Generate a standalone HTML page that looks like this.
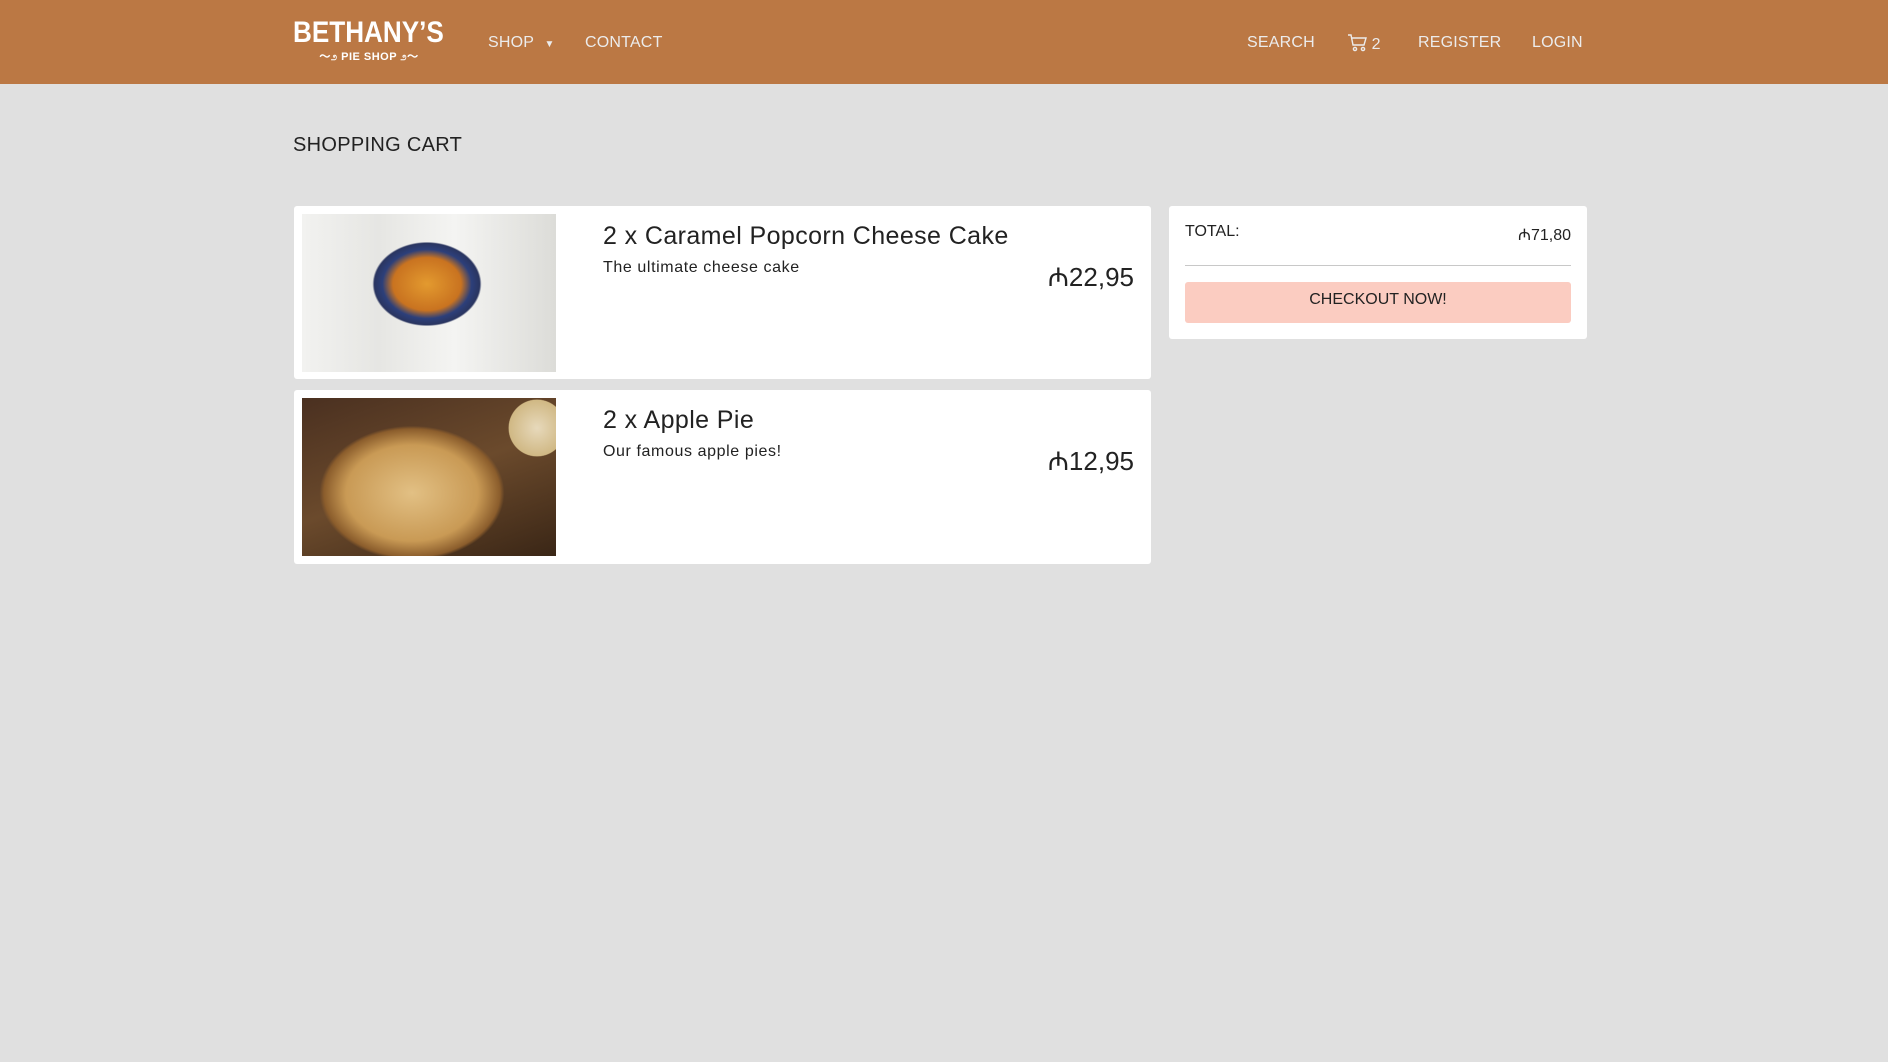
<!DOCTYPE html>
<html><head><meta charset="utf-8"><style>
*{margin:0;padding:0;box-sizing:border-box}
body{width:1888px;height:1062px;background:#e0e0e0;font-family:"Liberation Sans",sans-serif;color:#222;position:relative;overflow:hidden}
.nav{position:absolute;left:0;top:0;width:1888px;height:84px;background:#bb7844}
.nl{position:absolute;top:34px;font-size:16px;color:#ececec;letter-spacing:0.2px}
.logo{position:absolute;left:293px;top:17px;width:152px;height:50px;color:#fff;overflow:hidden}
.logo .b{font-family:"Liberation Sans Narrow","Liberation Sans",sans-serif;font-weight:bold;font-size:30px;line-height:32px;white-space:nowrap;transform:scaleX(0.87);transform-origin:left top;width:200px}
.logo .s{font-size:11px;font-weight:bold;line-height:16px;letter-spacing:0.5px;text-align:center;white-space:nowrap}
h1{position:absolute;left:293px;top:134px;font-size:20px;font-weight:normal;color:#222;letter-spacing:0.3px}
.card{position:absolute;background:#fff;border-radius:3px}
.img{position:absolute;left:8px;top:8px;width:254px;height:158px}
.t{position:absolute;left:309px;font-size:25px;color:#222;letter-spacing:0.4px}
.d{position:absolute;left:309px;font-size:16px;color:#222;letter-spacing:0.6px}
.p{position:absolute;right:17px;font-size:26px;color:#222}
.m{font-family:"DejaVu Sans",sans-serif}
</style></head><body>
<div class="nav">
 <div class="logo"><div class="b">BETHANY’S</div><div class="s">〜೨ PIE SHOP ೨〜</div></div>
 <div class="nl" style="left:488px">SHOP <span style="font-size:10px;margin-left:6px">▼</span></div>
 <div class="nl" style="left:585px">CONTACT</div>
 <div class="nl" style="left:1247px">SEARCH</div>
 <div class="nl" style="left:1347px"><svg width="20" height="18" viewBox="0 0 20 18" style="vertical-align:-3px" fill="none" stroke="#ececec" stroke-width="1.4"><path d="M1 1h3l2 10h11l2-7H5"/><circle cx="8" cy="15" r="1.6"/><circle cx="16" cy="15" r="1.6"/></svg> 2</div>
 <div class="nl" style="left:1418px">REGISTER</div>
 <div class="nl" style="left:1532px">LOGIN</div>
</div>
<h1>SHOPPING CART</h1>
<div class="card" style="left:294px;top:206px;width:857px;height:173px">
 <div class="img" style="background:radial-gradient(ellipse 62px 48px at 125px 70px,#e39a2f 0,#c97320 55%,#2c3f7a 72%,#2a3560 85%,transparent 88%),linear-gradient(90deg,#f2f2f0,#e6e6e3 30%,#f4f4f2 60%,#dcdcd8)"></div>
 <div class="t" style="top:16px">2 x Caramel Popcorn Cheese Cake</div>
 <div class="d" style="top:53px">The ultimate cheese cake</div>
 <div class="p" style="top:52px"><span class="m">₼</span>22,95</div>
</div>
<div class="card" style="left:294px;top:390px;width:857px;height:174px">
 <div class="img" style="background:radial-gradient(ellipse 110px 80px at 110px 95px,#e2c084 0,#c99a55 60%,#8b5d2c 80%,transparent 84%),radial-gradient(circle 40px at 235px 30px,#e7d9bb 0,#d0b884 70%,transparent 72%),linear-gradient(160deg,#4a3020,#6b4a2c 50%,#3a2616)"></div>
 <div class="t" style="top:16px">2 x Apple Pie</div>
 <div class="d" style="top:53px">Our famous apple pies!</div>
 <div class="p" style="top:52px"><span class="m">₼</span>12,95</div>
</div>
<div class="card" style="left:1169px;top:206px;width:418px;height:133px">
 <div style="position:absolute;left:16px;top:17px;font-size:16px">TOTAL:</div>
 <div style="position:absolute;right:16px;top:17px;font-size:16px"><span class="m">₼</span>71,80</div>
 <div style="position:absolute;left:16px;right:16px;top:59px;height:1px;background:#c8c8c8"></div>
 <div style="position:absolute;left:16px;right:16px;top:76px;height:41px;background:#fbccc1;border-radius:3px;text-align:center;font-size:16px;line-height:36px">CHECKOUT NOW!</div>
</div>
</body></html>
